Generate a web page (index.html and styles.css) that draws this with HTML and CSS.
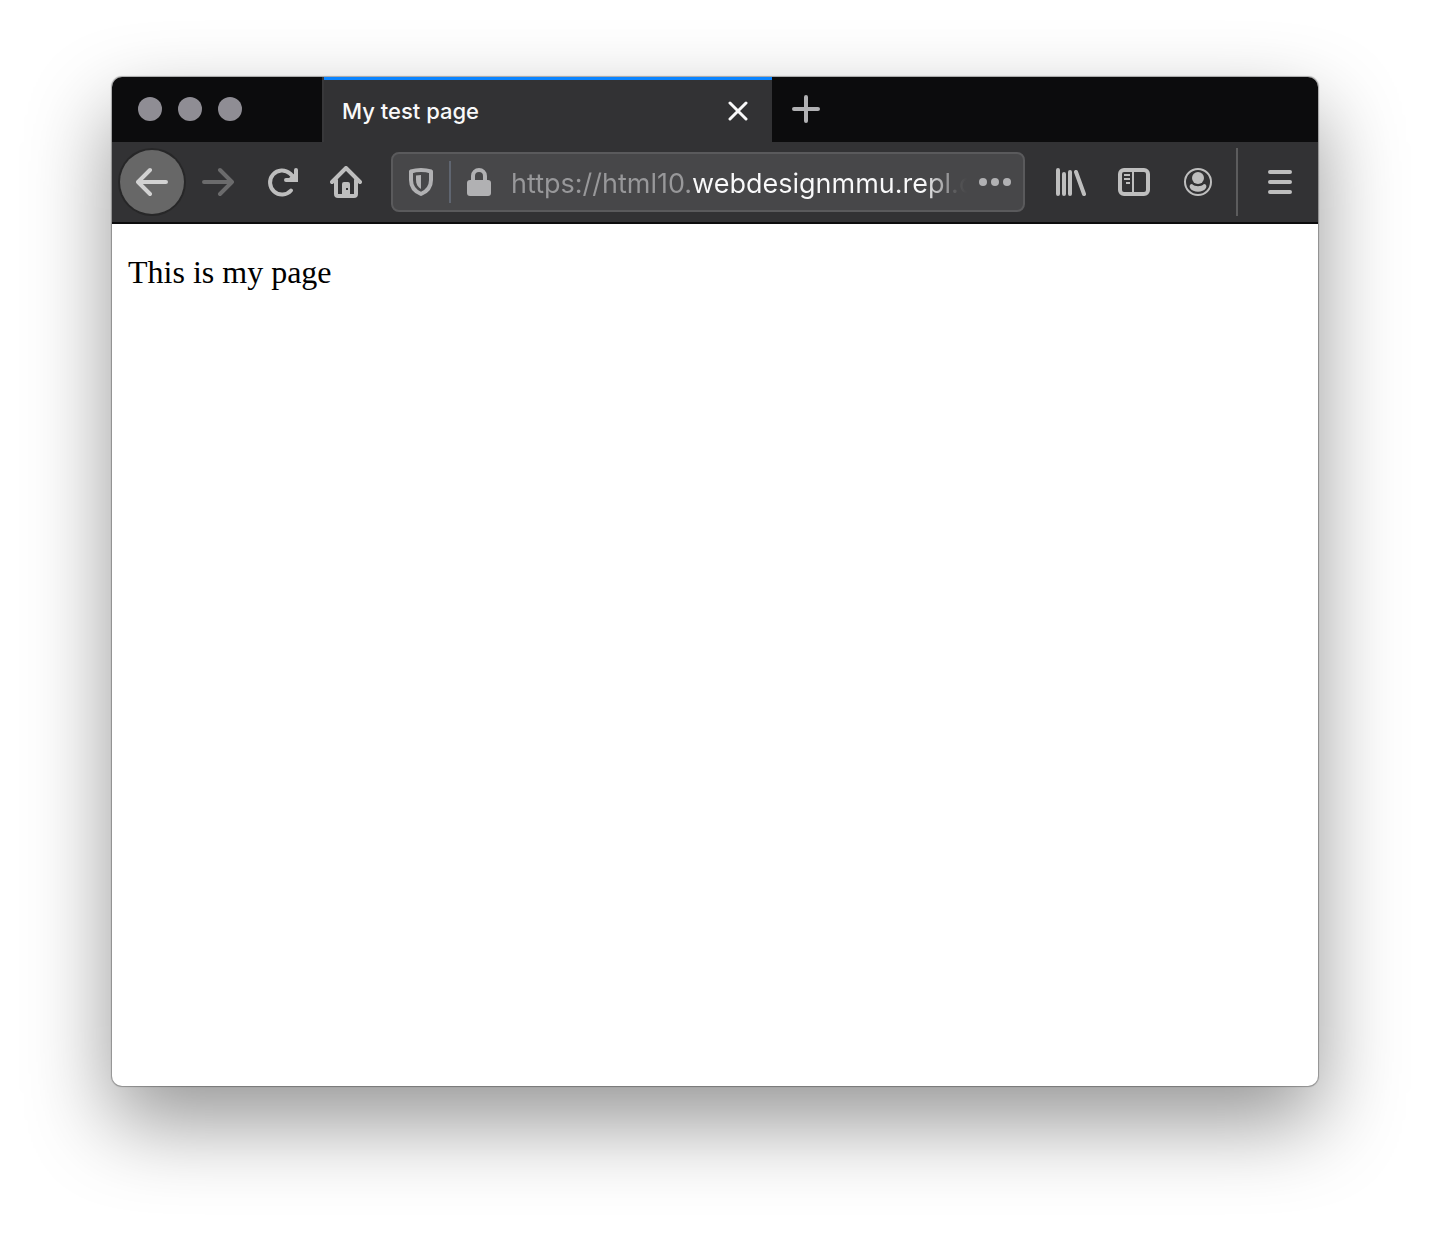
FILE: index.html
```html
<!DOCTYPE html>
<html lang="en">
<head>
<meta charset="utf-8">
<title>My test page</title>
<link rel="stylesheet" href="styles.css">
</head>
<body>
<div class="window">
  <header class="tab-strip">
    <div class="lights">
      <button class="light" aria-label="Close window"></button>
      <button class="light" aria-label="Minimise window"></button>
      <button class="light" aria-label="Zoom window"></button>
    </div>
    <div class="tab">
      <span class="tab-title">My test page</span>
      <button class="tab-close" aria-label="Close tab">
        <svg width="20" height="20" viewBox="0 0 20 20"><path d="M2 2 18 18M18 2 2 18" stroke-width="3"/></svg>
      </button>
    </div>
    <button class="new-tab" aria-label="New tab">
      <svg width="28" height="28" viewBox="0 0 28 28"><path d="M14 2V26M2 14H26" stroke-width="4"/></svg>
    </button>
  </header>
  <nav class="toolbar">
    <button class="tool back" aria-label="Back">
      <svg class="icon" viewBox="0 0 32 32"><path d="M14 4 2 16 14 28M2 16H30" stroke-width="4"/></svg>
    </button>
    <button class="tool forward" aria-label="Forward" disabled>
      <svg class="icon" viewBox="0 0 32 32"><path d="M18 4 30 16 18 28M30 16H2" stroke-width="4"/></svg>
    </button>
    <button class="tool" aria-label="Reload">
      <svg class="icon" viewBox="0 0 32 32"><path d="M25 24.500A12 12 0 1 1 24 7.500L28 11.500" stroke-width="4"/><path class="fill" d="M28 4Q28 2 30 2Q32 2 32 4V16H20Q18 16 18 14Q18 12 20 12H23L28 8Z"/></svg>
    </button>
    <button class="tool" aria-label="Home">
      <svg class="icon" viewBox="0 0 32 32"><path d="M2 16 16 2 30 16M6 14V28Q6 30 8 30H24Q26 30 26 28V14" stroke-width="4"/><path class="fill" fill-rule="evenodd" d="M12 30V18Q12 16 14 16H18Q20 16 20 18V30ZM16 22V24H18V22Z"/></svg>
    </button>
    <div class="url-bar">
      <button class="url-button" aria-label="Tracking protection">
        <svg class="icon" viewBox="0 0 32 32"><path d="M16 4C20 4 23 4.500 26 5.500V14C26 21 22 25.500 16 28C10 25.500 6 21 6 14V5.500C9 4.500 12 4 16 4Z" stroke-width="4"/><path class="fill" d="M16 9V23C12.500 21 11 18 11 14V9.500Z"/></svg>
      </button>
      <span class="url-rule"></span>
      <button class="url-button" aria-label="Site information">
        <svg class="icon" viewBox="0 0 32 32"><path d="M10 15V10A6 6 0 0 1 22 10V15" stroke-width="4"/><rect class="fill" x="4" y="14" width="24" height="16" rx="3"/></svg>
      </button>
      <input class="url" type="text" aria-label="Address" value="https://html10.webdesignmmu.repl.co" spellcheck="false">
      <button class="url-button more" aria-label="Page actions">
        <svg class="icon" viewBox="0 0 32 32"><g class="fill"><circle cx="4" cy="16" r="4"/><circle cx="16" cy="16" r="4"/><circle cx="28" cy="16" r="4"/></g></svg>
      </button>
    </div>
    <button class="tool" aria-label="Library">
      <svg class="icon" viewBox="0 0 32 32"><path d="M4 4V28M10 8V28M16 6V28M22 6 30 28" stroke-width="4"/></svg>
    </button>
    <button class="tool" aria-label="Sidebars">
      <svg class="icon" viewBox="0 0 32 32"><rect x="2" y="4" width="28" height="24" rx="4" stroke-width="4"/><path class="fill" d="M14 4H16V28H14ZM6 8H12V10H6ZM6 12H12V14H6ZM8 16H12V18H8Z"/></svg>
    </button>
    <button class="tool" aria-label="Account">
      <svg class="icon" viewBox="0 0 32 32"><circle cx="16" cy="16" r="13" stroke-width="2"/><circle class="fill" cx="16" cy="12" r="6"/><path class="fill" d="M10 18C13 21 19 21 22 18C24 18 25 20 24 22C21 27 11 27 8 22C7 20 8 18 10 18Z"/></svg>
    </button>
    <span class="tool-rule"></span>
    <button class="tool" aria-label="Open menu">
      <svg class="icon" viewBox="0 0 32 32"><path d="M6 6H26M6 16H26M6 26H26" stroke-width="4"/></svg>
    </button>
  </nav>
  <main class="page">
    <p>This is my page</p>
  </main>
</div>
</body>
</html>
```
FILE: styles.css
```css
* {
  box-sizing: border-box;
}

body {
  margin: 0;
  padding: 77px 112px 148px;
  background: #fff;
  font-family: Inter, "Liberation Sans", sans-serif;
}

button {
  display: flex;
  align-items: center;
  justify-content: center;
  flex: none;
  padding: 0;
  border: 0;
  background: none;
  color: inherit;
}

svg {
  display: block;
  fill: none;
  stroke: currentColor;
  stroke-linecap: round;
  stroke-linejoin: round;
}

.fill {
  fill: currentColor;
  stroke: none;
}

.icon {
  width: 32px;
  height: 32px;
}

.window {
  display: flex;
  flex-direction: column;
  min-height: calc(100vh - 225px);
  border-radius: 10px;
  overflow: hidden;
  background: #fff;
  box-shadow: 0 0 1px 1px rgba(0, 0, 0, 0.3), 0 36px 84px rgba(0, 0, 0, 0.42);
}

.tab-strip {
  display: flex;
  height: 65px;
  background: #0c0c0d;
  color: #b1b1b3;
}

.lights {
  display: flex;
  align-items: center;
  gap: 16px;
  width: 210px;
  padding: 0 0 2px 26px;
}

.light {
  width: 24px;
  height: 24px;
  border-radius: 50%;
  background: #8f8d94;
}

.tab {
  display: flex;
  align-items: center;
  justify-content: space-between;
  width: 450px;
  padding: 2px 24px 0 18px;
  border-left: 2px solid #38383a;
  background: #323234;
  box-shadow: inset 0 3px #0a84ff;
  color: #f9f9fa;
}

.tab-title {
  font-size: 22px;
  font-weight: 500;
  line-height: 32px;
}

.new-tab {
  width: 68px;
  padding-bottom: 2px;
}

.toolbar {
  display: flex;
  align-items: center;
  height: 82px;
  padding: 0 6px 0 8px;
  border-bottom: 2px solid #0c0c0d;
  background: #323234;
  color: #bebebe;
}

.tool {
  width: 64px;
  height: 64px;
}

.back {
  margin-right: 2px;
  border-radius: 50%;
  background: #676767;
  box-shadow: 0 0 0 2px #272728;
  color: #d2d2d2;
}

.forward {
  color: #6b6b6c;
}

.url-bar {
  display: flex;
  align-items: center;
  flex: 1;
  min-width: 0;
  height: 60px;
  margin: 0 13px;
  border: 2px solid #5a5a5c;
  border-radius: 8px;
  background: #474749;
  color: #b1b1b3;
}

.url-button {
  width: 56px;
  height: 56px;
}

.url-rule {
  width: 2px;
  height: 42px;
  background: #5f6570;
}

.url {
  flex: 1;
  min-width: 0;
  height: 56px;
  padding: 2px 0 0;
  margin-left: 4px;
  border: 0;
  outline: 0;
  font: 27px/32px Inter, "Liberation Sans", sans-serif;
  background: linear-gradient(90deg, #98989a 182px, #f9f9fa 182px, #f9f9fa 442px, #98989a 442px);
  background-clip: text;
  -webkit-background-clip: text;
  color: transparent;
  mask-image: linear-gradient(to left, transparent, #000 44px);
}

.tool-rule {
  width: 2px;
  height: 68px;
  margin: 0 10px 0 6px;
  background: #5c5c5d;
}

.page {
  flex: 1;
  padding: 0 16px;
  color: #000;
  font: 32px/32px "Liberation Serif", serif;
}

.page p {
  margin: 32px 0;
}
```
